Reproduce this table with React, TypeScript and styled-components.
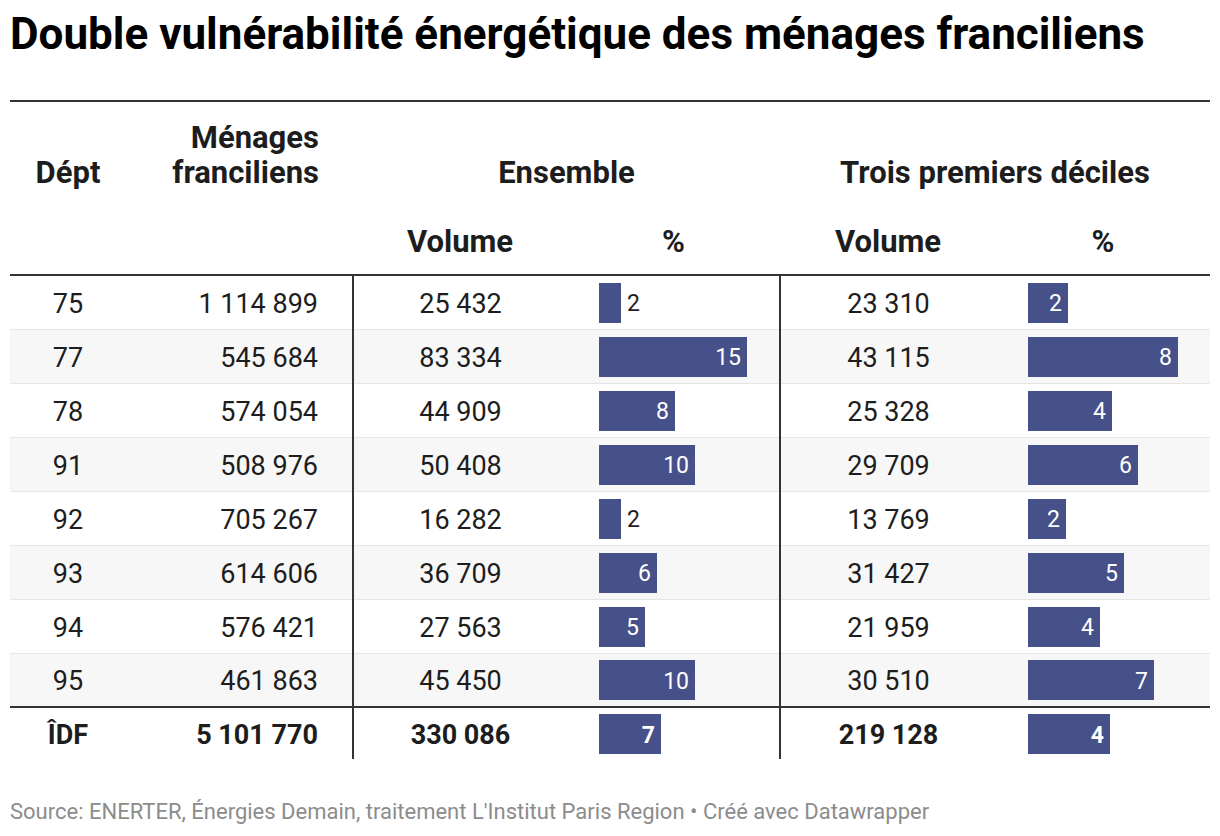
import React from "react";
import styled, { createGlobalStyle } from "styled-components";

const GlobalStyle = createGlobalStyle`
  body {
    margin: 0;
    background: #ffffff;
    font-family: Roboto, "Liberation Sans", sans-serif;
    color: #1d1d1d;
  }
`;

const Wrapper = styled.div`
  width: 1200px;
  padding: 0 10px;
`;

const Title = styled.h1`
  margin: 0;
  padding-top: 8px;
  height: 92px;
  font-size: 44px;
  line-height: 52px;
  font-weight: 700;
  color: #000000;
`;

const Table = styled.table`
  width: 1200px;
  table-layout: fixed;
  border-collapse: collapse;
  border-top: 2px solid #333333;
`;

const HeadCell = styled.th<{ $align?: string }>`
  font-size: 31px;
  font-weight: 700;
  line-height: 35px;
  text-align: ${(p) => p.$align || "center"};
  padding: 0;
  color: #1d1d1d;
`;

const GroupRow = styled.tr`
  height: 103px;

  th {
    vertical-align: bottom;
    padding-bottom: 14px;
  }
`;

const SubRow = styled.tr`
  height: 71px;
  border-bottom: 2px solid #333333;

  th {
    vertical-align: middle;
    padding-top: 4px;
  }
`;

const Row = styled.tr<{ $shade?: boolean }>`
  height: 54px;
  background: ${(p) => (p.$shade ? "#f7f7f7" : "#ffffff")};
  border-bottom: 1px solid #e6e6e6;
`;

const TotalRow = styled.tr`
  height: 52px;
  border-top: 2px solid #333333;
  font-weight: 700;
`;

const Cell = styled.td<{ $align?: string; $pad?: number; $divider?: boolean }>`
  font-size: 27px;
  text-align: ${(p) => p.$align || "center"};
  padding: 3px ${(p) => p.$pad || 0}px 0 0;
  border-left: ${(p) => (p.$divider ? "2px solid #333333" : "none")};
  vertical-align: middle;
`;

const BarCell = styled.td`
  padding: 1px 0 0 32px;
  vertical-align: middle;
`;

const BarWrap = styled.div`
  display: flex;
  align-items: center;
  height: 40px;
`;

const Bar = styled.div`
  height: 40px;
  background: #465089;
  display: flex;
  align-items: center;
  justify-content: flex-end;
  box-sizing: border-box;
  padding: 2px 6px 0 0;
  color: #ffffff;
  font-size: 23px;
`;

const OutLabel = styled.span`
  margin-left: 6px;
  padding-top: 2px;
  font-size: 23px;
  color: #1d1d1d;
`;

const Source = styled.div`
  margin-top: 40px;
  font-size: 22px;
  color: #8c8c8c;
`;

type Line = {
  dept: string;
  households: string;
  vol: string;
  pct: number;
  w: number;
  vol3: string;
  pct3: number;
  w3: number;
};

const lines: Line[] = [
  { dept: "75", households: "1 114 899", vol: "25 432", pct: 2, w: 22, vol3: "23 310", pct3: 2, w3: 40 },
  { dept: "77", households: "545 684", vol: "83 334", pct: 15, w: 148, vol3: "43 115", pct3: 8, w3: 150 },
  { dept: "78", households: "574 054", vol: "44 909", pct: 8, w: 76, vol3: "25 328", pct3: 4, w3: 84 },
  { dept: "91", households: "508 976", vol: "50 408", pct: 10, w: 96, vol3: "29 709", pct3: 6, w3: 110 },
  { dept: "92", households: "705 267", vol: "16 282", pct: 2, w: 22, vol3: "13 769", pct3: 2, w3: 38 },
  { dept: "93", households: "614 606", vol: "36 709", pct: 6, w: 58, vol3: "31 427", pct3: 5, w3: 96 },
  { dept: "94", households: "576 421", vol: "27 563", pct: 5, w: 46, vol3: "21 959", pct3: 4, w3: 72 },
  { dept: "95", households: "461 863", vol: "45 450", pct: 10, w: 96, vol3: "30 510", pct3: 7, w3: 126 },
];

const total: Line = {
  dept: "ÎDF",
  households: "5 101 770",
  vol: "330 086",
  pct: 7,
  w: 62,
  vol3: "219 128",
  pct3: 4,
  w3: 82,
};

const PctBar: React.FC<{ value: number; width: number }> = ({ value, width }) => {
  const inside = width >= 34;
  return (
    <BarWrap>
      <Bar style={{ width }}>{inside ? value : null}</Bar>
      {!inside && <OutLabel>{value}</OutLabel>}
    </BarWrap>
  );
};

const Cells: React.FC<{ line: Line }> = ({ line }) => (
  <>
    <Cell>{line.dept}</Cell>
    <Cell $align="right" $pad={34}>
      {line.households}
    </Cell>
    <Cell $divider>{line.vol}</Cell>
    <BarCell>
      <PctBar value={line.pct} width={line.w} />
    </BarCell>
    <Cell $divider>{line.vol3}</Cell>
    <BarCell>
      <PctBar value={line.pct3} width={line.w3} />
    </BarCell>
  </>
);

const App: React.FC = () => {
  return (
    <Wrapper>
      <GlobalStyle />
      <Title>Double vulnérabilité énergétique des ménages franciliens</Title>
      <Table>
        <colgroup>
          <col style={{ width: 116 }} />
          <col style={{ width: 227 }} />
          <col style={{ width: 214 }} />
          <col style={{ width: 213 }} />
          <col style={{ width: 216 }} />
          <col style={{ width: 214 }} />
        </colgroup>
        <thead>
          <GroupRow>
            <HeadCell>Dépt</HeadCell>
            <HeadCell $align="right" style={{ paddingRight: 34 }}>
              Ménages
              <br />
              franciliens
            </HeadCell>
            <HeadCell colSpan={2}>Ensemble</HeadCell>
            <HeadCell colSpan={2}>Trois premiers déciles</HeadCell>
          </GroupRow>
          <SubRow>
            <HeadCell />
            <HeadCell />
            <HeadCell>Volume</HeadCell>
            <HeadCell>%</HeadCell>
            <HeadCell>Volume</HeadCell>
            <HeadCell>%</HeadCell>
          </SubRow>
        </thead>
        <tbody>
          {lines.map((line, i) => (
            <Row key={line.dept} $shade={i % 2 === 1}>
              <Cells line={line} />
            </Row>
          ))}
          <TotalRow>
            <Cells line={total} />
          </TotalRow>
        </tbody>
      </Table>
      <Source>
        Source: ENERTER, Énergies Demain, traitement L'Institut Paris Region • Créé avec Datawrapper
      </Source>
    </Wrapper>
  );
};

export default App;
